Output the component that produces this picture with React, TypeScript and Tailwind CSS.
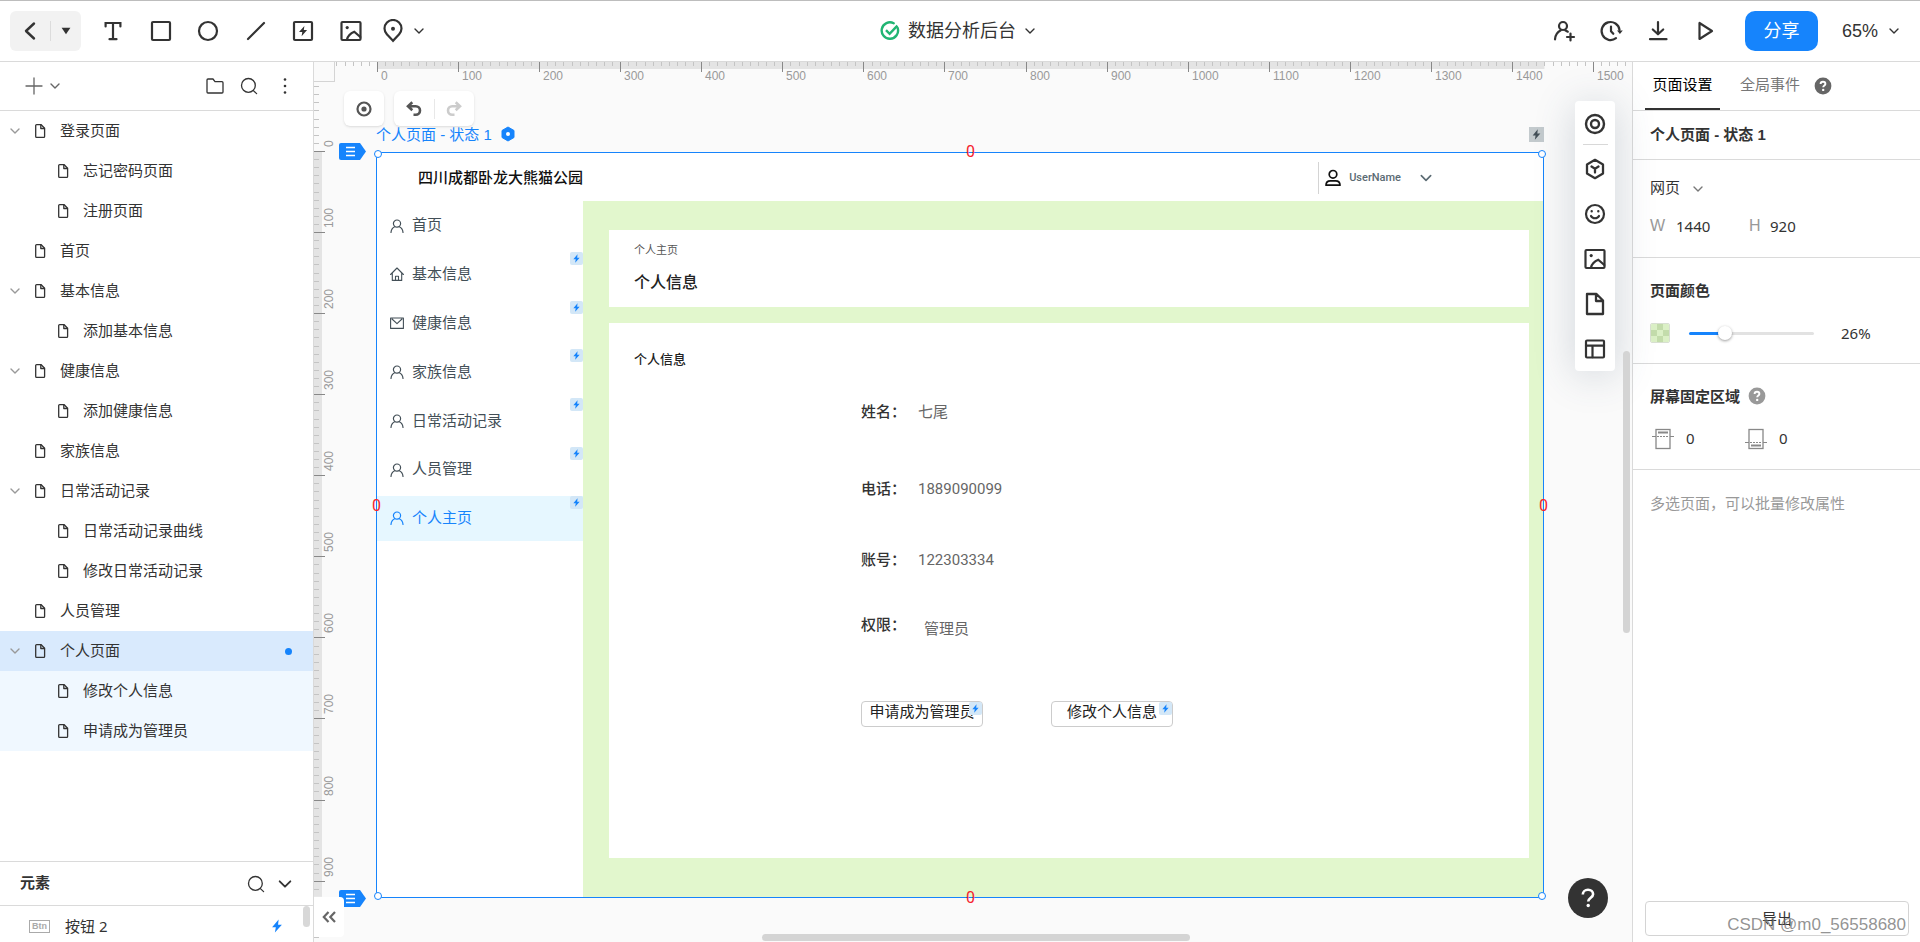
import React, { useState } from "react";

type IconProps = { className?: string };

const stroke = {
  fill: "none",
  stroke: "currentColor",
  strokeLinecap: "round" as const,
  strokeLinejoin: "round" as const,
};

function Chevron({ className = "size-3" }: IconProps) {
  return (
    <svg viewBox="0 0 12 12" className={`shrink-0 ${className}`} {...stroke} strokeWidth={1.4} aria-hidden="true">
      <path d="M2 4l4 4 4-4" />
    </svg>
  );
}

function Bolt({ className = "size-3" }: IconProps) {
  return (
    <svg viewBox="0 0 12 12" className={`shrink-0 ${className}`} fill="currentColor" aria-hidden="true">
      <path d="M7.4 0.4L1.800 7h3.2L4.2 11.600 10.200 5H6.900z" />
    </svg>
  );
}

function BoltBadge({ className = "" }: IconProps) {
  return (
    <span className={`absolute top-0 right-0 flex size-[13px] items-center justify-center rounded-xs bg-[#d3e7f7] text-[#1684fc] ${className}`}>
      <Bolt className="size-[9px]" />
    </span>
  );
}

function PageIcon({ className = "" }: IconProps) {
  return (
    <svg viewBox="0 0 12 14" className={`h-3.5 w-3 shrink-0 text-[#333] ${className}`} {...stroke} strokeWidth={1.3} aria-hidden="true">
      <path d="M1.7 1.6c0-.5.4-.9.9-.9h4.6l3.4 3.5v8.2c0 .5-.4.9-.9.9H2.6c-.5 0-.9-.4-.9-.9z" />
      <path d="M6.8 1v3.5h3.6" />
    </svg>
  );
}

function SearchIcon() {
  return (
    <svg viewBox="0 0 18 18" className="size-[18px]" {...stroke} strokeWidth={1.3} aria-hidden="true">
      <circle cx="8.4" cy="8.4" r="6.9" />
      <path d="M13.4 13.6l3.2 3" />
    </svg>
  );
}

function ImageIcon({ className = "size-6" }: IconProps) {
  return (
    <svg viewBox="0 0 24 24" className={className} {...stroke} strokeWidth={2.2} aria-hidden="true">
      <rect x="2.500" y="3" width="19" height="18" rx="1" />
      <circle cx="8.200" cy="8.600" r="1.600" fill="currentColor" stroke="none" />
      <path d="M8 20.500c.8-3.500 3.600-6.300 7.300-7.800l6 5.300" />
    </svg>
  );
}

function QuestionDot({ className = "" }: IconProps) {
  return (
    <svg viewBox="0 0 18 18" className={`size-[18px] shrink-0 ${className}`} aria-hidden="true">
      <circle cx="9" cy="9" r="8.400" fill="currentColor" />
      <path d="M6.600 7.100c0-1.300 1-2.300 2.400-2.300s2.400.9 2.400 2.100c0 1.600-2.200 1.600-2.200 3.300" fill="none" stroke="#fff" strokeWidth="1.900" />
      <circle cx="9.200" cy="12.900" r="1.200" fill="#fff" />
    </svg>
  );
}

const tools: { name: string; icon: React.ReactNode }[] = [
  {
    name: "文本",
    icon: (
      <svg viewBox="0 0 24 24" className="size-6" {...stroke} strokeWidth={2.200} strokeLinejoin="miter">
        <path d="M4.600 7.500V4h14.800v3.500M12 4v16M8.500 20.200h7" />
      </svg>
    ),
  },
  {
    name: "矩形",
    icon: (
      <svg viewBox="0 0 24 24" className="size-6" {...stroke} strokeWidth={2.200}>
        <rect x="3" y="3" width="18" height="18" rx="1" />
      </svg>
    ),
  },
  {
    name: "圆形",
    icon: (
      <svg viewBox="0 0 24 24" className="size-6" {...stroke} strokeWidth={2.200}>
        <circle cx="12" cy="12" r="9" />
      </svg>
    ),
  },
  {
    name: "线条",
    icon: (
      <svg viewBox="0 0 24 24" className="size-6" {...stroke} strokeWidth={2.200}>
        <path d="M4 20L20 4" />
      </svg>
    ),
  },
  {
    name: "交互",
    icon: (
      <svg viewBox="0 0 24 24" className="size-6" {...stroke} strokeWidth={2.200}>
        <rect x="3" y="3" width="18" height="18" rx="1" />
        <path d="M13.400 7l-5.400 6h3.300l-.7 4.200 5.500-6.100h-3.300z" fill="currentColor" stroke="none" />
      </svg>
    ),
  },
  { name: "图片", icon: <ImageIcon /> },
];

function Header() {
  return (
    <header className="flex h-[62px] shrink-0 items-center border-t border-b border-t-[#bdbdbd] border-b-[#dadada] bg-white text-[#333]">
      <div className="flex flex-1 items-center pl-2.5">
        <div className="mr-5 flex h-10 items-center rounded-md bg-[#f2f2f2]">
          <button aria-label="返回" className="flex h-10 w-10 items-center justify-center">
            <svg viewBox="0 0 20 20" className="size-5" {...stroke} strokeWidth={2.400}>
              <path d="M14 2.500L6 10l8 7.500" />
            </svg>
          </button>
          <span className="h-5 w-px bg-[#dcdcdc]" />
          <button aria-label="更多" className="flex h-10 w-[30px] items-center justify-center">
            <svg viewBox="0 0 10 8" className="h-2 w-2.5" fill="currentColor">
              <path d="M.6.800h8.800L5 7.300z" />
            </svg>
          </button>
        </div>
        <div className="mr-[18px] flex w-[262px] justify-between">
          {tools.map((t) => (
            <button key={t.name} aria-label={t.name}>
              {t.icon}
            </button>
          ))}
        </div>
        <button aria-label="标记" className="flex items-center gap-2">
          <svg viewBox="0 0 24 24" className="size-6" {...stroke} strokeWidth={2.200} strokeLinejoin="miter">
            <path d="M12 21.800l-5.900-6.200a8.500 8.500 0 1 1 11.800 0z" />
            <circle cx="12" cy="9.800" r="2" fill="currentColor" stroke="none" />
          </svg>
          <Chevron />
        </button>
      </div>
      <button className="ml-1.5 flex items-center gap-2">
        <svg viewBox="0 0 20 20" className="size-5" fill="none" stroke="#21b573" strokeWidth="2.400" aria-hidden="true">
          <path d="M13.700 2.300a8.200 8.200 0 1 0 4 4.800" strokeLinecap="round" />
          <path d="M6 9.200l3.600 3.600L17.400 4.600" />
        </svg>
        <span className="text-lg leading-6">数据分析后台</span>
        <Chevron />
      </button>
      <div className="flex flex-1 items-center justify-end pr-5">
        <div className="mr-7 flex gap-[23px]">
          <button aria-label="邀请">
            <svg viewBox="0 0 24 24" className="size-6" {...stroke} strokeWidth={2.200}>
              <circle cx="11" cy="7" r="4" />
              <path d="M3 20.300c.3-4.200 2.400-7.200 5.800-9M13.200 11.200l2.600 1.500M18.500 14.500v7M15 18h7" />
            </svg>
          </button>
          <button aria-label="历史">
            <svg viewBox="0 0 24 24" className="size-6" {...stroke} strokeWidth={2.200}>
              <path d="M20.500 11A9 9 0 1 0 17 19.200" />
              <path d="M18 11.500h5.800l-2.900 3.500z" fill="currentColor" stroke="none" />
              <path d="M12 7.500v4.700l2.300 2.600" />
            </svg>
          </button>
          <button aria-label="下载">
            <svg viewBox="0 0 24 24" className="size-6" {...stroke} strokeWidth={2.200}>
              <path d="M12 3v12M6.800 10.500L12 15.300l5.200-4.800M4 20.200h16.500" />
            </svg>
          </button>
          <button aria-label="预览">
            <svg viewBox="0 0 24 24" className="size-6" {...stroke} strokeWidth={2.200}>
              <path d="M6.500 4v16L19 12z" />
            </svg>
          </button>
        </div>
        <button className="mr-6 h-10 w-[73px] rounded-[10px] bg-[#1684fc] text-lg text-white">分享</button>
        <button className="flex items-center gap-2.5 text-lg">
          65%
          <Chevron />
        </button>
      </div>
    </header>
  );
}

type Page = { name: string; child?: boolean; open?: boolean; state?: "active" | "group" };

const pages: Page[] = [
  { name: "登录页面", open: true },
  { name: "忘记密码页面", child: true },
  { name: "注册页面", child: true },
  { name: "首页" },
  { name: "基本信息", open: true },
  { name: "添加基本信息", child: true },
  { name: "健康信息", open: true },
  { name: "添加健康信息", child: true },
  { name: "家族信息" },
  { name: "日常活动记录", open: true },
  { name: "日常活动记录曲线", child: true },
  { name: "修改日常活动记录", child: true },
  { name: "人员管理" },
  { name: "个人页面", open: true, state: "active" },
  { name: "修改个人信息", child: true, state: "group" },
  { name: "申请成为管理员", child: true, state: "group" },
];

function Sidebar() {
  return (
    <aside className="flex w-[314px] shrink-0 flex-col border-r border-[#dadada] bg-white text-[#333]">
      <div className="flex h-[49px] shrink-0 items-center border-b border-[#dadada] pr-[19px] pl-[25px]">
        <button aria-label="新建页面" className="flex items-center gap-1.5">
          <svg viewBox="0 0 18 18" className="size-[18px] text-[#666]" {...stroke} strokeWidth={1.300}>
            <path d="M9 1v16M1 9h16" />
          </svg>
          <Chevron className="size-3 text-[#666]" />
        </button>
        <div className="ml-auto flex items-center gap-4">
          <button aria-label="新建文件夹">
            <svg viewBox="0 0 18 18" className="size-[18px]" {...stroke} strokeWidth={1.300}>
              <path d="M1 3c0-.6.400-1 1-1h5l2 2.700h7c.6 0 1 .4 1 1V15c0 .6-.4 1-1 1H2c-.6 0-1-.4-1-1z" />
            </svg>
          </button>
          <button aria-label="搜索页面">
            <SearchIcon />
          </button>
          <button aria-label="更多操作" className="ml-0.5">
            <svg viewBox="0 0 18 18" className="size-[18px]" fill="currentColor">
              <circle cx="9" cy="2.500" r="1.300" />
              <circle cx="9" cy="9" r="1.300" />
              <circle cx="9" cy="15.500" r="1.300" />
            </svg>
          </button>
        </div>
      </div>
      <ul className="min-h-0 flex-1 overflow-hidden">
        {pages.map((p) => (
          <li key={p.name}>
            <button
              className={`flex h-10 w-full items-center pr-[21px] pl-[9px] text-[15px] ${
                p.state === "active" ? "bg-[#d9eafd]" : p.state === "group" ? "bg-[#f0f8ff]" : ""
              }`}
            >
              <span className={p.child ? "w-12" : "w-[25px]"}>{p.open && <Chevron className="size-3 text-[#999]" />}</span>
              <PageIcon />
              <span className="ml-3.5">{p.name}</span>
              {p.state === "active" && <span className="ml-auto size-[7px] rounded-full bg-[#1684fc]" />}
            </button>
          </li>
        ))}
      </ul>
      <section className="h-[81px] shrink-0 overflow-hidden border-t border-[#dadada]">
        <div className="flex h-11 items-center border-b border-[#dadada] pr-5 pl-5">
          <h2 className="text-[15px] font-bold">元素</h2>
          <button aria-label="搜索元素" className="ml-auto">
            <SearchIcon />
          </button>
          <button aria-label="收起元素" className="ml-3">
            <Chevron className="size-4" />
          </button>
        </div>
        <div className="flex h-10">
          <button className="flex flex-1 items-center pl-[29px] text-[15px] [font-family:'Noto_Sans','Noto_Sans_CJK_SC',sans-serif]">
            <span className="flex h-[13px] w-[21px] items-center justify-center border border-[#aaa] text-[9px] leading-3 font-bold text-[#aaa] [font-family:'Liberation_Sans',sans-serif]">
              Btn
            </span>
            <span className="ml-[15px]">按钮 2</span>
            <Bolt className="mr-[19px] ml-auto size-3.5 text-[#1684fc]" />
          </button>
          <span className="mr-[3px] h-[21px] w-[7px] rounded-full bg-[#d8d8d8]" />
        </div>
      </section>
    </aside>
  );
}

const UNIT = 81.07;
const columns = Array.from({ length: 16 }, (_, i) => i);
const rows = Array.from({ length: 10 }, (_, i) => i);
const minorsUpTo = (last: number) => Array.from({ length: last + 9 }, (_, i) => i - 8).filter((i) => i % 10 !== 0);
const columnMinors = minorsUpTo(154);
const rowMinors = minorsUpTo(98);

function HorizontalRuler() {
  return (
    <svg className="h-5 min-w-0 flex-1 overflow-hidden" width="100%" height="20" aria-hidden="true">
      <rect x="42" width={14.4 * UNIT} height="7" fill="#e4e4e4" />
      {columnMinors.map((i) => (
        <rect key={i} x={Math.round(42 + (i * UNIT) / 10)} width="1" height="4" fill="#c4c4c4" />
      ))}
      {columns.map((i) => (
        <g key={i}>
          <rect x={Math.round(42 + i * UNIT)} width="1" height="10" fill="#888" />
          <text x={Math.round(46 + i * UNIT)} y="18" fontSize="12" fill="#999">
            {i * 100}
          </text>
        </g>
      ))}
    </svg>
  );
}

function VerticalRuler() {
  return (
    <svg className="w-[21px] shrink-0 overflow-hidden" width="21" height="100%" aria-hidden="true">
      <rect y="69" width="8" height={9.2 * UNIT} fill="#e4e4e4" />
      {rowMinors.map((i) => (
        <rect key={i} y={Math.round(69 + (i * UNIT) / 10)} width="5" height="1" fill="#c4c4c4" />
      ))}
      {rows.map((i) => {
        const y = Math.round(69 + i * UNIT);
        return (
          <g key={i}>
            <rect y={y} width="11" height="1" fill="#888" />
            <text transform={`translate(19 ${y - 4}) rotate(-90)`} fontSize="12" fill="#999">
              {i * 100}
            </text>
          </g>
        );
      })}
    </svg>
  );
}

function UserGlyph() {
  return (
    <svg viewBox="0 0 14 14" className="size-3.5 shrink-0" {...stroke} strokeWidth={1.200} aria-hidden="true">
      <circle cx="7" cy="4.600" r="3.600" />
      <path d="M1 13.400c.3-3 1.600-4.700 3.700-5.600M13 13.400c-.3-3-1.600-4.700-3.700-5.600" />
    </svg>
  );
}

function HomeGlyph() {
  return (
    <svg viewBox="0 0 14 14" className="size-3.5 shrink-0" {...stroke} strokeWidth={1.100} aria-hidden="true">
      <path d="M.6 7.500L7 1l6.400 6.500M2.300 6.200v7.200h9.400V6.200M5.500 13.400V9.300h3v4.100" />
    </svg>
  );
}

function MailGlyph() {
  return (
    <svg viewBox="0 0 14 14" className="size-3.5 shrink-0" {...stroke} strokeWidth={1.100} aria-hidden="true">
      <path d="M.6 2h12.800v10.400H.6zM2 3l5 4.600L12 3" />
    </svg>
  );
}

const nav = [
  { name: "首页", icon: <UserGlyph /> },
  { name: "基本信息", icon: <HomeGlyph />, linked: true },
  { name: "健康信息", icon: <MailGlyph />, linked: true },
  { name: "家族信息", icon: <UserGlyph />, linked: true },
  { name: "日常活动记录", icon: <UserGlyph />, linked: true },
  { name: "人员管理", icon: <UserGlyph />, linked: true },
  { name: "个人主页", icon: <UserGlyph />, linked: true, active: true },
];

function Artboard() {
  return (
    <div className="flex h-full flex-col bg-white">
      <div className="flex h-12 shrink-0 items-center pt-0.5 pl-[41px]">
        <h1 className="text-[15px] font-medium text-[#111]">四川成都卧龙大熊猫公园</h1>
        <button className="mr-[110px] ml-auto flex h-8 items-center border-l border-[#d4d4d4] pl-1.5 text-[11px] font-medium text-[#5b6b73] [font-family:Roboto,sans-serif]">
          <svg viewBox="0 0 16 18" className="mr-2 h-[18px] w-4 text-[#111]" {...stroke} strokeWidth={1.700} aria-hidden="true">
            <circle cx="8" cy="5.300" r="3.800" />
            <path d="M1 16.200c0-3 1.800-4.400 4.400-4.400h5.200c2.600 0 4.400 1.400 4.400 4.400z" />
          </svg>
          UserName
          <Chevron className="ml-[18px] size-3.5" />
        </button>
      </div>
      <div className="flex min-h-0 flex-1">
        <nav className="flex w-[206px] shrink-0 flex-col pt-0.5">
          <ul className="flex h-[338px] flex-col justify-between">
            {nav.map((n) => (
              <li key={n.name} className="relative">
                <a
                  href="#"
                  className={`flex h-[45px] items-center gap-2 pl-[13px] text-[15px] ${
                    n.active ? "bg-[#e6f7ff] text-[#1684fc]" : "text-[#434f57]"
                  }`}
                >
                  {n.icon}
                  {n.name}
                </a>
                {n.linked && <BoltBadge />}
              </li>
            ))}
          </ul>
        </nav>
        <div className="flex min-w-0 flex-1 flex-col bg-[#e2f7cd] pt-[29px] pr-3.5 pb-[39px] pl-[26px]">
          <div className="h-[77px] shrink-0 bg-white px-[25px] pt-3">
            <p className="text-[11px] leading-4 text-[#555]">个人主页</p>
            <h2 className="mt-[13px] text-base leading-6 font-medium text-[#222]">个人信息</h2>
          </div>
          <div className="mt-4 min-h-0 flex-1 bg-white px-[25px] pt-[27px]">
            <h3 className="text-[13px] leading-5 font-medium text-[#222]">个人信息</h3>
            <div className="ml-[227px] text-[15px] leading-6 text-[#666] [font-family:Roboto,'Noto_Sans_CJK_SC',sans-serif]">
              <dl className="pt-[30px]">
                <div className="flex h-[77px]">
                  <dt className="w-[57px] font-medium text-[#333]">姓名：</dt>
                  <dd>七尾</dd>
                </div>
                <div className="flex h-[71px]">
                  <dt className="w-[57px] font-medium text-[#333]">电话：</dt>
                  <dd>1889090099</dd>
                </div>
                <div className="flex h-[65px]">
                  <dt className="w-[57px] font-medium text-[#333]">账号：</dt>
                  <dd>122303334</dd>
                </div>
                <div className="flex h-[88px]">
                  <dt className="w-[57px] font-medium text-[#333]">权限：</dt>
                  <dd className="pt-1 pl-1.5">管理员</dd>
                </div>
              </dl>
              <div className="flex gap-[68px] leading-5 text-[#222]">
                <button className="relative h-[26px] w-[122px] rounded-sm border border-[#ccc] pb-1">
                  申请成为管理员
                  <BoltBadge />
                </button>
                <button className="relative h-[26px] w-[122px] rounded-sm border border-[#ccc] pb-1">
                  修改个人信息
                  <BoltBadge />
                </button>
              </div>
            </div>
          </div>
        </div>
      </div>
    </div>
  );
}

function Handle({ className }: IconProps) {
  return <span className={`absolute size-2 rounded-full border border-[#1684fc] bg-white ${className}`} />;
}

function Distance({ className }: IconProps) {
  return <span className={`absolute text-base leading-4 text-[#f5222d] [font-family:Roboto,sans-serif] ${className}`}>0</span>;
}

function EdgeTag({ className }: IconProps) {
  return (
    <svg viewBox="0 0 27 17" className={`absolute h-[17px] w-[27px] ${className}`} aria-hidden="true">
      <path d="M2 0h19l6 8.500L21 17H2a2 2 0 0 1-2-2V2a2 2 0 0 1 2-2z" fill="#1684fc" />
      <path d="M7 4.500h9M7 8.500h9M7 12.500h9" stroke="#fff" strokeWidth="1.300" />
    </svg>
  );
}

const dock = [
  {
    name: "组件",
    icon: (
      <svg viewBox="0 0 24 24" className="size-6" {...stroke} strokeWidth={2.300}>
        <path d="M12 2.800l8 4.600v9.200l-8 4.600-8-4.600V7.400zM8.500 9.500l3.500 2.200 3.500-2.200M12 11.700V15.500" />
      </svg>
    ),
  },
  {
    name: "图标",
    icon: (
      <svg viewBox="0 0 24 24" className="size-6" {...stroke} strokeWidth={2.200}>
        <circle cx="12" cy="12" r="9" />
        <path d="M8 14c1.600 3 6.400 3 8 0" />
        <path d="M8.700 9.200h.01M15.300 9.200h.01" strokeWidth={2.400} />
      </svg>
    ),
  },
  { name: "图片", icon: <ImageIcon /> },
  {
    name: "页面",
    icon: (
      <svg viewBox="0 0 24 24" className="size-6" {...stroke} strokeWidth={2.300}>
        <path d="M4 2h9.500L20 8.500V22H4zM13 2.500V9h6.500" />
      </svg>
    ),
  },
  {
    name: "模板",
    icon: (
      <svg viewBox="0 0 24 24" className="size-6" {...stroke} strokeWidth={2.200}>
        <rect x="3" y="3.500" width="18" height="17" rx="1" />
        <path d="M3 8.700h18M9.500 8.700v11.500" />
      </svg>
    ),
  },
];

function Canvas() {
  return (
    <main className="relative flex min-w-0 flex-1 flex-col bg-[#fafafa]">
      <div className="flex h-5 shrink-0">
        <span className="w-[21px] shrink-0 border-r border-b border-[#d4d4d4]" />
        <HorizontalRuler />
      </div>
      <div className="flex min-h-0 flex-1">
        <VerticalRuler />
        <div className="flex min-w-0 flex-1 flex-col pr-[88px] pb-11">
          <div className="mt-[9px] ml-[9px] flex h-[35px] shrink-0 gap-2.5 text-[#555]">
            <button aria-label="定位" className="flex w-10 items-center justify-center rounded-md bg-white shadow-sm">
              <svg viewBox="0 0 16 16" className="size-4" fill="none" stroke="currentColor" strokeWidth={2.200}>
                <circle cx="8" cy="8" r="6.500" />
                <circle cx="8" cy="8" r="2.600" fill="currentColor" stroke="none" />
              </svg>
            </button>
            <div className="flex w-20 items-center rounded-md bg-white shadow-sm">
              <button aria-label="撤销" className="flex flex-1 justify-center">
                <svg viewBox="0 0 16 16" className="size-4" fill="none" stroke="currentColor" strokeWidth={2.600}>
                  <path d="M6.300 1.300L2 5.300l4.300 4M2.200 5.300h7.600a4.200 4.200 0 0 1 0 8.400H7.500" />
                </svg>
              </button>
              <span className="h-5 w-px bg-[#e8e8e8]" />
              <button aria-label="重做" disabled className="flex flex-1 justify-center text-[#ccc]">
                <svg viewBox="0 0 16 16" className="size-4" fill="none" stroke="currentColor" strokeWidth={2.600}>
                  <path d="M9.700 1.300l4.300 4-4.300 4M13.800 5.300H6.200a4.200 4.200 0 0 0 0 8.400h2.300" />
                </svg>
              </button>
            </div>
          </div>
          <div className="flex h-[26px] shrink-0 items-start pl-[41px] text-[#1684fc]">
            <span className="text-[15px] leading-[18px]">个人页面 - 状态 1</span>
            <svg viewBox="0 0 14 16" className="ml-[9px] h-4 w-3.5" aria-hidden="true">
              <path d="M7 1l6 3.500v7L7 15l-6-3.500v-7z" fill="currentColor" stroke="currentColor" strokeLinejoin="round" />
              <circle cx="7" cy="8" r="2" fill="#fff" />
            </svg>
            <span className="mt-px ml-auto flex size-[15px] items-center justify-center bg-[#c3cacd] text-[#434f57]">
              <Bolt className="size-[11px]" />
            </span>
          </div>
          <div className="relative ml-[41px] min-h-0 flex-1 border border-[#1684fc]">
            <Artboard />
            <Handle className="-top-[3px] -left-[3px]" />
            <Handle className="-top-[3px] -right-[3px]" />
            <Handle className="-bottom-[3px] -left-[3px]" />
            <Handle className="-right-[3px] -bottom-[3px]" />
            <Distance className="-top-[9px] left-1/2 ml-1.5" />
            <Distance className="-bottom-[9px] left-1/2 ml-1.5" />
            <Distance className="top-[345px] -left-[5px]" />
            <Distance className="top-[345px] -right-[5px]" />
            <EdgeTag className="-top-2.5 -left-[38px]" />
            <EdgeTag className="-bottom-2.5 -left-[38px]" />
          </div>
        </div>
      </div>
      <button aria-label="收起侧栏" className="absolute bottom-[5px] left-0 flex h-10 w-[30px] items-center justify-center rounded-r-sm bg-white text-[#666]">
        <svg viewBox="0 0 14 12" className="h-3 w-3.5" fill="none" stroke="currentColor" strokeWidth={2.200}>
          <path d="M6.500 1L1.800 6l4.700 5M13 1L8.300 6l4.700 5" />
        </svg>
      </button>
      <div className="absolute top-[39px] right-[17px] flex w-10 flex-col items-center rounded-sm bg-white pt-[11px] pb-2.5 text-[#333] shadow-[0_4px_40px_rgba(60,80,110,0.22)]">
        <button aria-label="资源">
          <svg viewBox="0 0 24 24" className="size-6" fill="none" stroke="currentColor" strokeWidth={2.400}>
            <circle cx="12" cy="12" r="9" />
            <circle cx="12" cy="12" r="4" />
          </svg>
        </button>
        <span className="mt-2 mb-3 h-px w-[25px] bg-[#d8d8d8]" />
        <div className="flex flex-col gap-[21px]">
          {dock.map((d) => (
            <button key={d.name} aria-label={d.name}>
              {d.icon}
            </button>
          ))}
        </div>
      </div>
      <span className="absolute top-[289px] right-0.5 h-[282px] w-[7px] rounded-full bg-[#d4d4d4]" />
      <span className="absolute bottom-px left-[34%] h-[7px] w-[428px] rounded-full bg-[#d4d4d4]" />
      <button aria-label="帮助" className="absolute right-6 bottom-6 flex size-10 items-center justify-center rounded-full bg-[#333] text-white">
        <svg viewBox="0 0 20 20" className="size-5" {...stroke} strokeWidth={2.600} strokeLinecap="butt">
          <path d="M4.800 6.500c0-2.700 2.200-4.700 5.200-4.700s5.100 1.900 5.100 4.500c0 3.400-4.900 3.500-4.900 7.200" />
          <circle cx="10.200" cy="17.500" r="1.700" fill="currentColor" stroke="none" />
        </svg>
      </button>
    </main>
  );
}

function FixedArea({ bottom, id, label }: { bottom?: boolean; id: string; label: string }) {
  return (
    <label htmlFor={id} className="flex w-[93px] items-center gap-3">
      <svg viewBox="0 0 22 22" className="size-[22px] shrink-0" fill="none" stroke="#888" role="img" aria-label={label}>
        <rect x="4" y="1.500" width="14" height="19" strokeWidth="1.300" />
        {bottom ? (
          <>
            <path d="M6 17.500h10" strokeWidth="2" />
            <path d="M0 14.500h4M18 14.500h4" />
            <path d="M5 14.500h12" strokeDasharray="2 1" />
          </>
        ) : (
          <>
            <path d="M6 4.500h10" strokeWidth="2" />
            <path d="M0 8.500h4M18 8.500h4" />
            <path d="M5 8.500h12" strokeDasharray="2 1" />
          </>
        )}
      </svg>
      <input id={id} defaultValue="0" className="h-5 w-10 bg-transparent pb-0.5 outline-none" />
    </label>
  );
}

function Inspector() {
  const [opacity, setOpacity] = useState(26);
  return (
    <aside className="flex w-[288px] shrink-0 flex-col border-l border-[#dadada] bg-white text-[15px] text-[#333] [font-family:'Noto_Sans','Noto_Sans_CJK_SC',sans-serif]">
      <div className="flex h-[49px] shrink-0 items-stretch border-b border-[#dadada] pl-3">
        <button className="w-[75px] border-b-2 border-[#333] pb-0.5 text-black">页面设置</button>
        <button className="ml-5 pb-1 text-[#777]">全局事件</button>
        <button aria-label="帮助" className="ml-3.5 text-[#666]">
          <QuestionDot />
        </button>
      </div>
      <h2 className="flex h-[49px] shrink-0 items-center border-b border-[#dadada] pl-[17px] font-bold [font-family:'Liberation_Sans','Noto_Sans_CJK_SC',sans-serif]">
        个人页面 - 状态 1
      </h2>
      <section className="h-[98px] shrink-0 border-b border-[#dadada] pt-[15px] pl-[17px]">
        <div className="relative w-fit">
          <select aria-label="页面类型" className="h-6 w-14 appearance-none bg-transparent outline-none">
            <option>网页</option>
          </select>
          <Chevron className="pointer-events-none absolute top-2 right-0.5 size-3 text-[#777]" />
        </div>
        <div className="mt-[15px] flex items-center leading-6">
          <label htmlFor="w" className="w-[26px] text-base leading-6 text-[#999] [font-family:'Liberation_Sans',sans-serif]">
            W
          </label>
          <input id="w" defaultValue="1440" className="w-[73px] bg-transparent outline-none" />
          <label htmlFor="h" className="w-[21px] text-base leading-6 text-[#999] [font-family:'Liberation_Sans',sans-serif]">
            H
          </label>
          <input id="h" defaultValue="920" className="w-16 bg-transparent outline-none" />
        </div>
      </section>
      <section className="h-[106px] shrink-0 border-b border-[#dadada] pt-5 pl-[17px]">
        <h3 className="leading-6 font-bold">页面颜色</h3>
        <div className="mt-[21px] flex items-center">
          <button aria-label="颜色" className="size-5 shrink-0 overflow-hidden rounded-xs border border-[#d8dfd2]">
            <svg viewBox="0 0 18 18" className="size-full" aria-hidden="true">
              <rect width="18" height="18" fill="#dbf0c6" />
              <path d="M6 0h6v6H6zM0 6h6v6H0zM12 6h6v6h-6zM6 12h6v6H6z" fill="#c3dcab" />
            </svg>
          </button>
          <input
            type="range"
            aria-label="不透明度"
            value={opacity}
            onChange={(e) => setOpacity(Number(e.target.value))}
            style={{ backgroundImage: `linear-gradient(to right, #1684fc ${opacity + 2}%, #e2e2e2 ${opacity + 2}%)` }}
            className="ml-[19px] h-[3px] w-[125px] appearance-none rounded-full [&::-webkit-slider-thumb]:size-3.5 [&::-webkit-slider-thumb]:appearance-none [&::-webkit-slider-thumb]:rounded-full [&::-webkit-slider-thumb]:bg-white [&::-webkit-slider-thumb]:shadow-[0_1px_3px_rgba(0,0,0,0.4)]"
          />
          <span className="ml-[27px] leading-5">{opacity}%</span>
        </div>
      </section>
      <section className="h-[106px] shrink-0 border-b border-[#dadada] pt-5 pl-[17px]">
        <h3 className="flex items-center gap-2 leading-6 font-bold">
          屏幕固定区域
          <QuestionDot className="text-[#999]" />
        </h3>
        <div className="mt-5 ml-0.5 flex leading-5">
          <FixedArea id="fixed-top" label="顶部" />
          <FixedArea id="fixed-bottom" label="底部" bottom />
        </div>
      </section>
      <p className="mt-[21px] pl-[17px] leading-6 text-[#999]">多选页面，可以批量修改属性</p>
      <div className="relative mt-auto mr-[11px] mb-1.5 ml-3">
        <button className="h-[35px] w-full rounded-sm border border-[#d4d4d4]">导出</button>
        <span className="pointer-events-none absolute right-[3px] bottom-px text-[17px] leading-5 text-[#777]/80 [font-family:'Liberation_Sans',sans-serif]">
          CSDN @m0_56558680
        </span>
      </div>
    </aside>
  );
}

export default function App() {
  return (
    <div className="flex h-screen flex-col overflow-hidden bg-white [font-family:'Liberation_Sans','Noto_Sans_CJK_SC',sans-serif]">
      <Header />
      <div className="flex min-h-0 flex-1">
        <Sidebar />
        <Canvas />
        <Inspector />
      </div>
    </div>
  );
}
